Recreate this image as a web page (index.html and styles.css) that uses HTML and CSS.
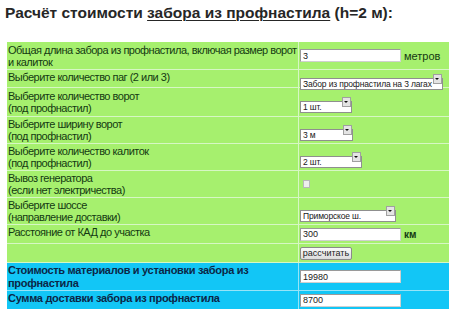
FILE: index.html
```html
<!DOCTYPE html>
<html lang="ru">
<head>
<meta charset="utf-8">
<title>Расчёт стоимости забора</title>
<link rel="stylesheet" href="styles.css">
</head>
<body>
<h1 class="title">Расчёт стоимости <span class="link">забора из профнастила</span> (h=2 м):</h1>
<form class="calc">
  <div class="row h27">
    <div class="lbl pt2">Общая длина забора из профнастила, включая размер ворот<br>и калиток</div>
    <div class="fld"><input class="txt" type="text" value="3"><span class="unit">метров</span></div>
  </div>
  <div class="row h17">
    <div class="lbl pt1">Выберите количество паг (2 или 3)</div>
    <div class="fld"><span class="sel w143"><select><option>Забор из профнастила на 3 лагах</option></select><span class="arr"></span></span></div>
  </div>
  <div class="row h28">
    <div class="lbl pt2">Выберите количество ворот<br>(под профнастил)</div>
    <div class="fld"><span class="sel w52"><select><option>1 шт.</option></select><span class="arr"></span></span></div>
  </div>
  <div class="row h26">
    <div class="lbl pt1">Выберите ширину ворот<br>(под профнастил)</div>
    <div class="fld"><span class="sel w53"><select><option>3 м</option></select><span class="arr"></span></span></div>
  </div>
  <div class="row h26">
    <div class="lbl pt1">Выберите количество калиток<br>(под профнастил)</div>
    <div class="fld"><span class="sel w62"><select><option>2 шт.</option></select><span class="arr"></span></span></div>
  </div>
  <div class="row h26">
    <div class="lbl pt1">Вывоз генератора<br>(если нет электричества)</div>
    <div class="fld"><input class="chk" type="checkbox"></div>
  </div>
  <div class="row h26">
    <div class="lbl pt1">Выберите шоссе<br>(направление доставки)</div>
    <div class="fld"><span class="sel w96"><select><option>Приморское ш.</option></select><span class="arr"></span></span></div>
  </div>
  <div class="row h18">
    <div class="lbl pt1">Расстояние от КАД до участка</div>
    <div class="fld"><input class="txt" type="text" value="300"><span class="unit km">км</span></div>
  </div>
  <div class="row h18">
    <div class="lbl"></div>
    <div class="fld"><button class="btn" type="button">рассчитать</button></div>
  </div>
  <div class="row h27 blue">
    <div class="lbl pt1">Стоимость материалов и установки забора из<br>профнастила</div>
    <div class="fld"><input class="txt" type="text" value="19980"></div>
  </div>
  <div class="row h18 blue last">
    <div class="lbl pt1">Сумма доставки забора из профнастила</div>
    <div class="fld"><input class="txt" type="text" value="8700"></div>
  </div>
</form>
</body>
</html>
```

FILE: styles.css
```css
html, body {
  margin: 0;
  padding: 0;
  background: #ffffff;
}

body {
  font-family: "Liberation Sans", Arial, sans-serif;
}

.title {
  margin: 0;
  padding: 4px 0 0 5px;
  font-size: 15.5px;
  line-height: 18px;
  font-weight: bold;
  color: #262626;
}

.title .link {
  text-decoration: underline;
  text-decoration-thickness: 1px;
  text-underline-offset: 2px;
}

.calc {
  margin: 20px 0 0 7px;
  width: 442px;
}

.row {
  display: grid;
  grid-template-columns: 291px 150px;
  column-gap: 1px;
  background: #d6f7c4;
  padding-bottom: 1px;
}

.row.last {
  padding-bottom: 0;
}

.row.blue {
  background: #96e4f8;
}

.h17 { height: 17px; }
.h18 { height: 18px; }
.h26 { height: 26px; }
.h27 { height: 27px; }
.h28 { height: 28px; }

.lbl,
.fld {
  background: #a6f06e;
}

.blue .lbl,
.blue .fld {
  background: #12c6f6;
}

.lbl {
  box-sizing: border-box;
  padding-left: 1px;
  font-size: 11px;
  line-height: 12px;
  letter-spacing: -0.5px;
  white-space: nowrap;
  overflow: hidden;
  color: #143a12;
}

.blue .lbl {
  font-weight: bold;
  letter-spacing: -0.3px;
  color: #0b2747;
  line-height: 13px;
}

.pt1 { padding-top: 1px; }
.pt2 { padding-top: 2px; }

.fld {
  display: flex;
  align-items: center;
  padding-left: 1px;
  gap: 3px;
}

.txt {
  box-sizing: border-box;
  width: 101px;
  height: 13px;
  margin: 0;
  padding: 0 2px;
  border: 1px solid #9a9a9a;
  border-right-color: #d0d0d0;
  border-bottom-color: #d0d0d0;
  background: #ffffff;
  font-family: "Liberation Sans", Arial, sans-serif;
  font-size: 9px;
  color: #202020;
  outline: none;
}

.unit {
  font-size: 11px;
  color: #143a12;
}

.unit.km {
  font-size: 10px;
  font-weight: bold;
}

.sel {
  position: relative;
  display: inline-block;
  height: 12px;
}

.sel select {
  appearance: none;
  -webkit-appearance: none;
  box-sizing: border-box;
  width: 100%;
  height: 12px;
  margin: 0;
  padding: 0 9px 0 2px;
  border: 1px solid #8f8f8f;
  border-radius: 0;
  background: #ffffff;
  font-family: "Liberation Sans", Arial, sans-serif;
  font-size: 8.5px;
  letter-spacing: -0.15px;
  line-height: 10px;
  color: #202020;
  outline: none;
}

.w143 { width: 143px; }
.w52 { width: 52px; }
.w53 { width: 53px; }
.w62 { width: 62px; }
.w96 { width: 96px; }

.sel .arr {
  position: absolute;
  top: 1px;
  right: 1px;
  width: 7px;
  height: 8px;
  border: 1px solid #a0a0a0;
  background: #e4e4e4;
}

.sel .arr::after {
  content: "";
  position: absolute;
  left: 1px;
  top: 3px;
  border-left: 2.5px solid transparent;
  border-right: 2.5px solid transparent;
  border-top: 2.5px solid #111111;
}

.chk {
  appearance: none;
  -webkit-appearance: none;
  box-sizing: border-box;
  width: 7px;
  height: 8px;
  margin: 0 0 0 3px;
  border: 1px solid #b8b8b8;
  background: #eeeeee;
}

.btn {
  box-sizing: border-box;
  width: 52px;
  height: 13px;
  margin: 0;
  padding: 0;
  border: 1px solid #8a8a8a;
  border-radius: 2px;
  background: linear-gradient(#fafafa, #dcdcdc);
  font-family: "Liberation Sans", Arial, sans-serif;
  font-size: 9px;
  line-height: 11px;
  color: #222222;
}
```
